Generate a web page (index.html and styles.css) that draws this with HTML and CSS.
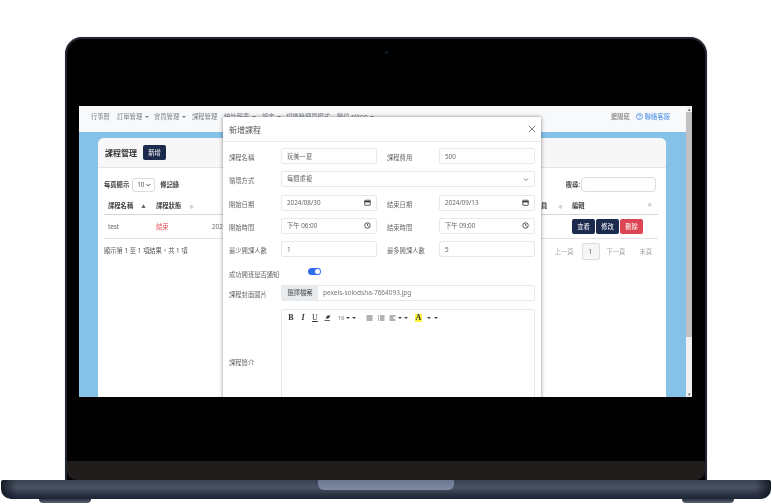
FILE: index.html
```html
<!DOCTYPE html>
<html lang="zh-Hant">
<head>
    <meta charset="UTF-8">
    <meta name="viewport" content="width=device-width, initial-scale=1.0">
    <title>課程管理</title>
    <link rel="stylesheet" href="styles.css">
</head>
<body>
    <div class="laptop">
        <div class="lid">
            <div class="bezel-top"><span class="camera"></span></div>
            <div class="screen">
                <div class="site">
                    <nav class="topnav">
                        <a class="nav-item nav-first">行事曆</a>
                        <a class="nav-item w37">訂單管理 <i class="caret"></i></a>
                        <a class="nav-item w38">會員管理 <i class="caret"></i></a>
                        <a class="nav-item w32">課程管理</a>
                        <a class="nav-item w38">統計報表 <i class="caret"></i></a>
                        <a class="nav-item w24">設定 <i class="caret"></i></a>
                        <a class="nav-item w51">切換管理員模式</a>
                        <a class="nav-item">數位 nikon <i class="caret"></i></a>
                        <span class="nav-right">
                            <a class="nav-shop">遮陽底</a>
                            <a class="nav-help">
                                <svg width="7" height="7" viewBox="0 0 14 14" fill="none" stroke="#3b82e6" stroke-width="1.4"><circle cx="7" cy="7" r="6"/><path d="M5 5.5c0-3 4.200-2.500 4 0 0 1.500-2 1.500-2 3.200M7 10v1.200"/></svg>
                                聯絡客服
                            </a>
                        </span>
                    </nav>
                    <main class="content">
                        <section class="card">
                            <header class="card-head">
                                <h1 class="card-title">課程管理</h1>
                                <button class="btn btn-navy btn-add">新增</button>
                            </header>
                            <div class="card-body">
                                <div class="table-tools">
                                    <span class="bold-label">每頁顯示</span>
                                    <span class="page-size">10 <svg width="5" height="4" viewBox="0 0 10 8" fill="none" stroke="#444" stroke-width="1.800"><path d="M1 2l4 4 4-4"/></svg></span>
                                    <span class="bold-label">條記錄</span>
                                    <label class="bold-label search-label">搜尋:<input class="search-input" type="text"></label>
                                </div>
                                <table class="course-table">
                                    <colgroup>
                                        <col class="col-48"><col class="col-56"><col class="col-100"><col class="col-110"><col class="col-100"><col class="col-50"><col class="col-90">
                                    </colgroup>
                                    <thead>
                                        <tr>
                                            <th>課程名稱<i class="sort sort-on">▲</i></th>
                                            <th>課程狀態<i class="sort">◆</i></th>
                                            <th></th>
                                            <th></th>
                                            <th></th>
                                            <th class="th-people">員<i class="sort sort-gap">◆</i></th>
                                            <th>編輯<i class="sort sort-end">◆</i></th>
                                        </tr>
                                    </thead>
                                    <tbody>
                                        <tr>
                                            <td>test</td>
                                            <td class="status-end">結束</td>
                                            <td>202</td>
                                            <td></td>
                                            <td></td>
                                            <td></td>
                                            <td class="actions">
                                                <button class="btn btn-navy">查看</button>
                                                <button class="btn btn-navy">修改</button>
                                                <button class="btn btn-red">刪除</button>
                                            </td>
                                        </tr>
                                    </tbody>
                                </table>
                                <div class="table-foot">
                                    <span>顯示第 1 至 1 項結果，共 1 項</span>
                                    <div class="pager">
                                        <a class="pager-link">上一頁</a>
                                        <a class="pager-current">1</a>
                                        <a class="pager-link">下一頁</a>
                                        <a class="pager-link pager-last">末頁</a>
                                    </div>
                                </div>
                            </div>
                        </section>
                    </main>
                </div>
                <div class="scrollbar">
                    <span class="scroll-arrow">▴</span>
                    <span class="scroll-thumb"></span>
                    <span class="scroll-arrow scroll-arrow-down">▾</span>
                </div>

                <div class="modal">
                    <header class="modal-head">
                        <h2 class="modal-title">新增課程</h2>
                        <svg width="8" height="8" viewBox="0 0 16 16" stroke="#666" stroke-width="1.600"><path d="M1.500 1.500l13 13M14.500 1.500l-13 13"/></svg>
                    </header>
                    <form class="modal-form">
                        <label class="form-label">課程名稱</label>
                        <input class="field" type="text" value="玩美一夏">
                        <label class="form-label label-2">課程費用</label>
                        <input class="field" type="text" value="500">

                        <label class="form-label">循環方式</label>
                        <div class="field field-icon span-3">
                            每週重複
                            <svg width="6" height="5" viewBox="0 0 12 10" fill="none" stroke="#555" stroke-width="1.600"><path d="M2 3l4 4 4-4"/></svg>
                        </div>

                        <label class="form-label">開始日期</label>
                        <div class="field field-icon">
                            2024/08/30
                            <svg class="cal" width="7" height="7" viewBox="0 0 14 14" fill="none" stroke="#222" stroke-width="1.500"><rect x="1.500" y="2.500" width="11" height="10" rx="1"/><path d="M1.500 5.500h11" stroke-width="2.500"/></svg>
                        </div>
                        <label class="form-label label-2">結束日期</label>
                        <div class="field field-icon">
                            2024/09/13
                            <svg class="cal" width="7" height="7" viewBox="0 0 14 14" fill="none" stroke="#222" stroke-width="1.500"><rect x="1.500" y="2.500" width="11" height="10" rx="1"/><path d="M1.500 5.500h11" stroke-width="2.500"/></svg>
                        </div>

                        <label class="form-label">開始時間</label>
                        <div class="field field-icon">
                            下午 06:00
                            <svg class="cal" width="7" height="7" viewBox="0 0 14 14" fill="none" stroke="#222" stroke-width="1.500"><circle cx="7" cy="7" r="5.500"/><path d="M7 3.500V7l2.500 1.500"/></svg>
                        </div>
                        <label class="form-label label-2">結束時間</label>
                        <div class="field field-icon">
                            下午 09:00
                            <svg class="cal" width="7" height="7" viewBox="0 0 14 14" fill="none" stroke="#222" stroke-width="1.500"><circle cx="7" cy="7" r="5.500"/><path d="M7 3.500V7l2.500 1.500"/></svg>
                        </div>

                        <label class="form-label">最少開課人數</label>
                        <input class="field" type="text" value="1">
                        <label class="form-label label-2">最多開課人數</label>
                        <input class="field" type="text" value="5">

                        <div class="switch-row span-4">
                            <label class="form-label switch-label">成功開班是否通知</label>
                            <span class="switch"><span class="switch-knob"></span></span>
                        </div>

                        <label class="form-label">課程封面圖片</label>
                        <div class="file-field span-3">
                            <span class="file-btn">選擇檔案</span>
                            <span class="file-name">pexels-solodsha-7664093.jpg</span>
                        </div>

                        <label class="form-label label-mid">課程簡介</label>
                        <div class="editor span-3">
                            <div class="toolbar">
                                <b class="tool tool-b">B</b>
                                <i class="tool tool-i">I</i>
                                <u class="tool tool-u">U</u>
                                <span class="tool">
                                    <svg width="7" height="6" viewBox="0 0 14 12" fill="#333"><path d="M7 1h6l-4 6H3z"/><path d="M1 10h11v1.500H1z"/></svg>
                                </span>
                                <span class="tool tool-size">16 <i class="caret caret-tool"></i> <i class="caret caret-tool"></i></span>
                                <span class="tool">
                                    <svg width="7" height="6" viewBox="0 0 14 12" stroke="#333" stroke-width="1.500"><path d="M1 2h12M1 6h12M1 10h12"/></svg>
                                </span>
                                <span class="tool">
                                    <svg width="7" height="6" viewBox="0 0 14 12" stroke="#333" stroke-width="1.500"><path d="M4 2h9M4 6h9M4 10h9M1 1v2M1 5v2M1 9v2"/></svg>
                                </span>
                                <span class="tool tool-align">
                                    <svg width="7" height="6" viewBox="0 0 14 12" stroke="#333" stroke-width="1.500"><path d="M1 2h12M1 6h8M1 10h12"/></svg>
                                    <i class="caret caret-tool"></i> <i class="caret caret-tool"></i>
                                </span>
                                <span class="tool tool-color">A</span>
                                <span class="tool tool-carets"><i class="caret caret-tool"></i> <i class="caret caret-tool"></i></span>
                            </div>
                        </div>
                    </form>
                </div>
            </div>
            <div class="chin"></div>
        </div>
        <div class="base"><span class="base-notch"></span></div>
        <div class="feet"><span class="foot"></span><span class="foot"></span></div>
    </div>
</body>
</html>
```

FILE: styles.css
```css
* {
    box-sizing: border-box;
}

body {
    margin: 0;
    background-color: #fff;
    font-family: "Noto Sans", "Noto Sans CJK TC", sans-serif;
    font-size: 6.3px;
    color: #555;
}

/* laptop frame */
.laptop {
    display: flex;
    flex-direction: column;
    align-items: center;
    width: 772px;
    height: 504px;
    padding-top: 37px;
    overflow: hidden;
}

.lid {
    display: flex;
    flex-direction: column;
    flex: none;
    width: 642px;
    height: 443px;
    background-color: #000;
    border: 2px solid #22262e;
    border-bottom: 0;
    border-radius: 17px 17px 0 0;
    box-shadow: 0 0 1px #8d95a3;
}

.bezel-top {
    display: flex;
    justify-content: center;
    flex: none;
    height: 67px;
    padding-top: 12px;
}

.camera {
    width: 3px;
    height: 3px;
    border-radius: 50%;
    background-color: #0d2233;
}

.screen {
    position: relative;
    display: flex;
    flex: none;
    height: 291px;
    margin: 0 13px 0 12px;
    overflow: hidden;
    filter: blur(0.4px);
}

.chin {
    flex: none;
    height: 19px;
    margin-top: auto;
    background-color: #1f1c1b;
    border-radius: 0 0 9px 9px;
}

.base {
    display: flex;
    justify-content: center;
    flex: none;
    width: 770px;
    height: 19px;
    background-image:
        linear-gradient(90deg, #151a26, rgba(21, 26, 38, 0) 2%, rgba(21, 26, 38, 0) 98%, #151a26),
        linear-gradient(#394252, #4a5263 40%, #2c3445 75%, #1c2331);
    border-radius: 2px 2px 10px 10px;
}

.base-notch {
    width: 136px;
    height: 10px;
    background-image: linear-gradient(#6a768f, #7f8aa3);
    border-radius: 0 0 6px 6px;
}

.feet {
    display: flex;
    justify-content: space-between;
    flex: none;
    width: 695px;
}

.foot {
    width: 52px;
    height: 4px;
    background-image: linear-gradient(#2b3444, #596272);
    border-radius: 0 0 4px 4px;
}

/* page inside the screen */
.site {
    display: flex;
    flex-direction: column;
    flex: 1;
    min-width: 0;
}

.topnav {
    display: flex;
    align-items: center;
    flex: none;
    height: 26px;
    padding: 0 16px 5px 12px;
    background-color: #f8f9fa;
    color: #7b8289;
    white-space: nowrap;
}

.nav-item {
    display: block;
}

.nav-first {
    width: 26px;
}

.w24 {
    width: 24px;
}

.w32 {
    width: 32px;
}

.w37 {
    width: 37px;
}

.w38 {
    width: 38px;
}

.w51 {
    width: 51px;
}

.caret {
    display: inline-block;
    width: 0;
    height: 0;
    margin-left: 1px;
    vertical-align: 1px;
    border-top: 2px solid currentColor;
    border-left: 2px solid transparent;
    border-right: 2px solid transparent;
}

.nav-right {
    display: flex;
    align-items: center;
    gap: 6px;
    margin-left: auto;
}

.nav-shop {
    color: #666;
}

.nav-help {
    display: flex;
    align-items: center;
    gap: 2px;
    color: #4a8ee8;
}

.content {
    display: flex;
    flex: 1;
    padding: 6px 20px 0 19px;
    background-color: #86c1e8;
}

.card {
    flex: 1;
    background-color: #fff;
    border-radius: 6px 6px 0 0;
}

.card-head {
    display: flex;
    align-items: center;
    gap: 6px;
    height: 30px;
    padding: 0 7px;
    background-color: #f7f7f7;
    border-bottom: 1px solid #e4e4e4;
    border-radius: 6px 6px 0 0;
}

.card-title {
    margin: 0;
    font-size: 8px;
    font-weight: 700;
    color: #333;
}

.card-body {
    padding: 9px 8px 0 6px;
}

.btn {
    height: 15px;
    width: 23px;
    padding: 0;
    border: 0;
    border-radius: 2px;
    font-family: inherit;
    font-size: 6.3px;
    color: #fff;
}

.btn-navy {
    background-color: #1c2a4e;
}

.btn-red {
    background-color: #dc4654;
}

.table-tools {
    display: flex;
    align-items: center;
    height: 15px;
}

.bold-label {
    font-weight: 700;
    color: #444;
}

.page-size {
    display: flex;
    align-items: center;
    justify-content: space-between;
    width: 23px;
    height: 14px;
    margin: 0 5px 0 3px;
    padding: 0 3px 0 4px;
    font-weight: 400;
    border: 1px solid #dcdcdc;
    border-radius: 3px;
}

.search-label {
    display: flex;
    align-items: center;
    margin-left: auto;
    margin-right: 2px;
}

.search-input {
    width: 75px;
    height: 15px;
    margin-left: 1px;
    background-color: #fff;
    border: 1px solid #dcdcdc;
    border-radius: 4px;
}

.course-table {
    width: 554px;
    margin-top: 5px;
    table-layout: fixed;
    border-collapse: collapse;
}

.col-48 {
    width: 48px;
}

.col-50 {
    width: 50px;
}

.col-56 {
    width: 56px;
}

.col-90 {
    width: 90px;
}

.col-100 {
    width: 100px;
}

.col-110 {
    width: 110px;
}

.course-table th {
    height: 17px;
    padding: 0 4px;
    text-align: left;
    font-weight: 700;
    color: #444;
    white-space: nowrap;
    border-bottom: 1px solid #d8d8d8;
}

.course-table .th-people {
    padding-left: 23px;
}

.course-table td {
    height: 24px;
    padding: 0 4px;
    color: #666;
    border-bottom: 1px solid #e2e2e2;
}

.sort {
    margin-left: 8px;
    font-size: 4.5px;
    font-style: normal;
    font-weight: 400;
    color: #d4d4d4;
}

.sort-on {
    color: #666;
}

.sort-gap {
    margin-left: 11px;
}

.sort-end {
    float: right;
    margin: 0 2px 0 0;
}

.course-table .status-end {
    color: #e4505c;
}

.course-table .actions {
    display: flex;
    align-items: center;
    gap: 1px;
}

.table-foot {
    display: flex;
    justify-content: space-between;
    margin-top: 4px;
}

.table-foot > span {
    padding-top: 3px;
}

.pager {
    display: flex;
    align-items: center;
    height: 17px;
    margin-right: 6px;
    color: #a5a5a5;
}

.pager-current {
    width: 18px;
    height: 17px;
    margin: 0 7px 0 8px;
    line-height: 16px;
    text-align: center;
    color: #555;
    background-color: #f6f6f6;
    border: 1px solid #dcdcdc;
    border-radius: 2px;
}

.pager-last {
    margin-left: 14px;
}

.scrollbar {
    display: flex;
    flex-direction: column;
    flex: none;
    width: 6px;
    background-color: #f1f1f1;
}

.scroll-arrow {
    flex: none;
    height: 6px;
    font-size: 5px;
    line-height: 6px;
    text-align: center;
    color: #666;
}

.scroll-thumb {
    flex: none;
    height: 225px;
    background-color: #c1c1c1;
}

.scroll-arrow-down {
    margin-top: auto;
}

/* add course dialog */
.modal {
    position: absolute;
    left: 144px;
    top: 11px;
    width: 318px;
    height: 320px;
    background-color: #fff;
    box-shadow: 0 0 4px rgba(0, 0, 0, 0.45);
}

.modal-head {
    display: flex;
    align-items: center;
    justify-content: space-between;
    height: 25px;
    padding: 0 5px 0 6px;
    border-bottom: 1px solid #e9e9e9;
}

.modal-title {
    margin: 0;
    font-size: 8px;
    font-weight: 400;
    color: #555;
}

.modal-form {
    display: grid;
    grid-template-columns: 52px 96px 62px 96px;
    grid-auto-rows: min-content;
    row-gap: 7.33px;
    padding: 6px 6px 0;
}

.form-label {
    padding-top: 3px;
    line-height: 13px;
    color: #666;
    white-space: nowrap;
}

.label-2 {
    padding-left: 10px;
}

.label-mid {
    align-self: center;
    padding-top: 0;
}

.field {
    display: block;
    width: 100%;
    height: 16px;
    padding: 0 5px;
    font-family: inherit;
    font-size: 6.3px;
    line-height: 14px;
    color: #666;
    background-color: #fff;
    border: 1px solid #e6e8ea;
    border-radius: 2px;
}

.field-icon {
    display: flex;
    align-items: center;
    justify-content: space-between;
}

.span-3 {
    grid-column: span 3;
}

.span-4 {
    grid-column: span 4;
}

.switch-row {
    display: flex;
    align-items: flex-start;
    height: 13.5px;
    padding-top: 3px;
}

.switch-label {
    flex: none;
    width: 79px;
    padding-top: 0;
}

.switch {
    display: flex;
    justify-content: flex-end;
    align-items: center;
    width: 13px;
    height: 7px;
    padding: 0 1px;
    background-color: #2f6fed;
    border-radius: 4px;
}

.switch-knob {
    width: 5px;
    height: 5px;
    background-color: #fff;
    border-radius: 50%;
}

.file-field {
    display: flex;
    height: 16px;
    border: 1px solid #e6e8ea;
    border-radius: 2px;
    overflow: hidden;
    line-height: 14px;
}

.file-btn {
    width: 36px;
    text-align: center;
    color: #444;
    background-color: #e9ecef;
}

.file-name {
    padding-left: 5px;
    font-size: 6.5px;
    color: #777;
}

.editor {
    height: 108px;
    border: 1px solid #e6e8ea;
    border-radius: 2px;
}

.toolbar {
    display: flex;
    align-items: center;
    height: 16px;
    padding: 0 0 0 3px;
    color: #333;
}

.tool {
    display: flex;
    align-items: center;
    justify-content: center;
    flex: none;
    width: 12px;
    font-family: "Liberation Serif", serif;
    font-size: 8px;
}

.tool-b {
    font-weight: 700;
}

.tool-i {
    font-weight: 700;
    font-style: italic;
}

.tool-u {
    text-decoration: underline;
}

.tool-size {
    gap: 2px;
    width: 22px;
    margin-left: 3px;
    margin-right: 5px;
    font-family: inherit;
    font-size: 6px;
    color: #777;
}

.caret-tool {
    margin-left: 0;
    vertical-align: 0;
    border-top-color: #444;
}

.tool-align {
    gap: 2px;
    width: 22px;
}

.tool-color {
    width: 7px;
    height: 8px;
    margin-left: 6px;
    font-weight: 700;
    background-color: #ffef3d;
}

.tool-carets {
    gap: 3px;
    width: 14px;
    margin-left: 3px;
}
```
